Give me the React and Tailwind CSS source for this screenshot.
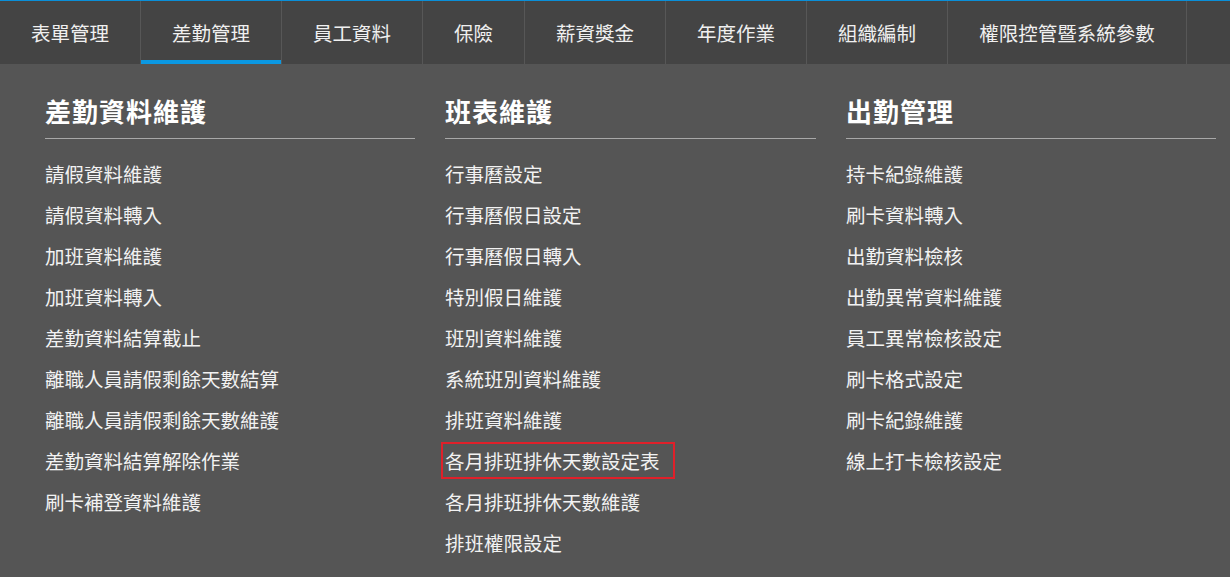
import React from "react";

const navItems = [
  { label: "表單管理", w: "w-[141px]" },
  { label: "差勤管理", w: "w-[141px]", active: true },
  { label: "員工資料", w: "w-[141px]" },
  { label: "保險", w: "w-[102px]" },
  { label: "薪資獎金", w: "w-[141px]" },
  { label: "年度作業", w: "w-[141px]" },
  { label: "組織編制", w: "w-[141px]" },
  { label: "權限控管暨系統參數", w: "w-[239px]" },
];

const columns = [
  {
    title: "差勤資料維護",
    items: [
      "請假資料維護",
      "請假資料轉入",
      "加班資料維護",
      "加班資料轉入",
      "差勤資料結算截止",
      "離職人員請假剩餘天數結算",
      "離職人員請假剩餘天數維護",
      "差勤資料結算解除作業",
      "刷卡補登資料維護",
    ],
  },
  {
    title: "班表維護",
    items: [
      "行事曆設定",
      "行事曆假日設定",
      "行事曆假日轉入",
      "特別假日維護",
      "班別資料維護",
      "系統班別資料維護",
      "排班資料維護",
      "各月排班排休天數設定表",
      "各月排班排休天數維護",
      "排班權限設定",
    ],
    highlight: 7,
  },
  {
    title: "出勤管理",
    items: [
      "持卡紀錄維護",
      "刷卡資料轉入",
      "出勤資料檢核",
      "出勤異常資料維護",
      "員工異常檢核設定",
      "刷卡格式設定",
      "刷卡紀錄維護",
      "線上打卡檢核設定",
    ],
  },
];

export default function App() {
  return (
    <div
      className="min-h-[577px] bg-[#555555] text-[#f2f2f2]"
      style={{ fontFamily: '"Noto Sans CJK TC", "Noto Sans", sans-serif' }}
    >
      <nav className="flex h-[64px] border-t border-[#0a8fd8] bg-[#444444]">
        {navItems.map((it) => (
          <div
            key={it.label}
            className={`${it.w} relative flex h-full items-center justify-center border-r border-[#575757] text-[19.5px] text-[#f0f0f0]`}
          >
            <span className="leading-none">{it.label}</span>
            {it.active && (
              <div className="absolute bottom-0 left-0 right-0 h-[4px] bg-[#0b98e2]" />
            )}
          </div>
        ))}
      </nav>
      <div className="grid grid-cols-[370px_371px_370px] gap-x-[30px] pl-[45px] pt-[29px]">
        {columns.map((col) => (
          <div key={col.title}>
            <div className="border-b border-[#a8a8a8] pb-[9px]">
              <h2 className="h-[36px] text-[26px] font-bold leading-[36px] tracking-[1px] text-white">
                {col.title}
              </h2>
            </div>
            <ul className="mt-[14px]">
              {col.items.map((item, i) => (
                <li key={item} className="flex h-[41px] items-center text-[19.5px]">
                  {col.highlight === i ? (
                    <span className="-ml-[4px] inline-flex h-[37px] items-center border-2 border-[#e0202a] pl-[2px] pr-[13px]">
                      {item}
                    </span>
                  ) : (
                    <span>{item}</span>
                  )}
                </li>
              ))}
            </ul>
          </div>
        ))}
      </div>
    </div>
  );
}
